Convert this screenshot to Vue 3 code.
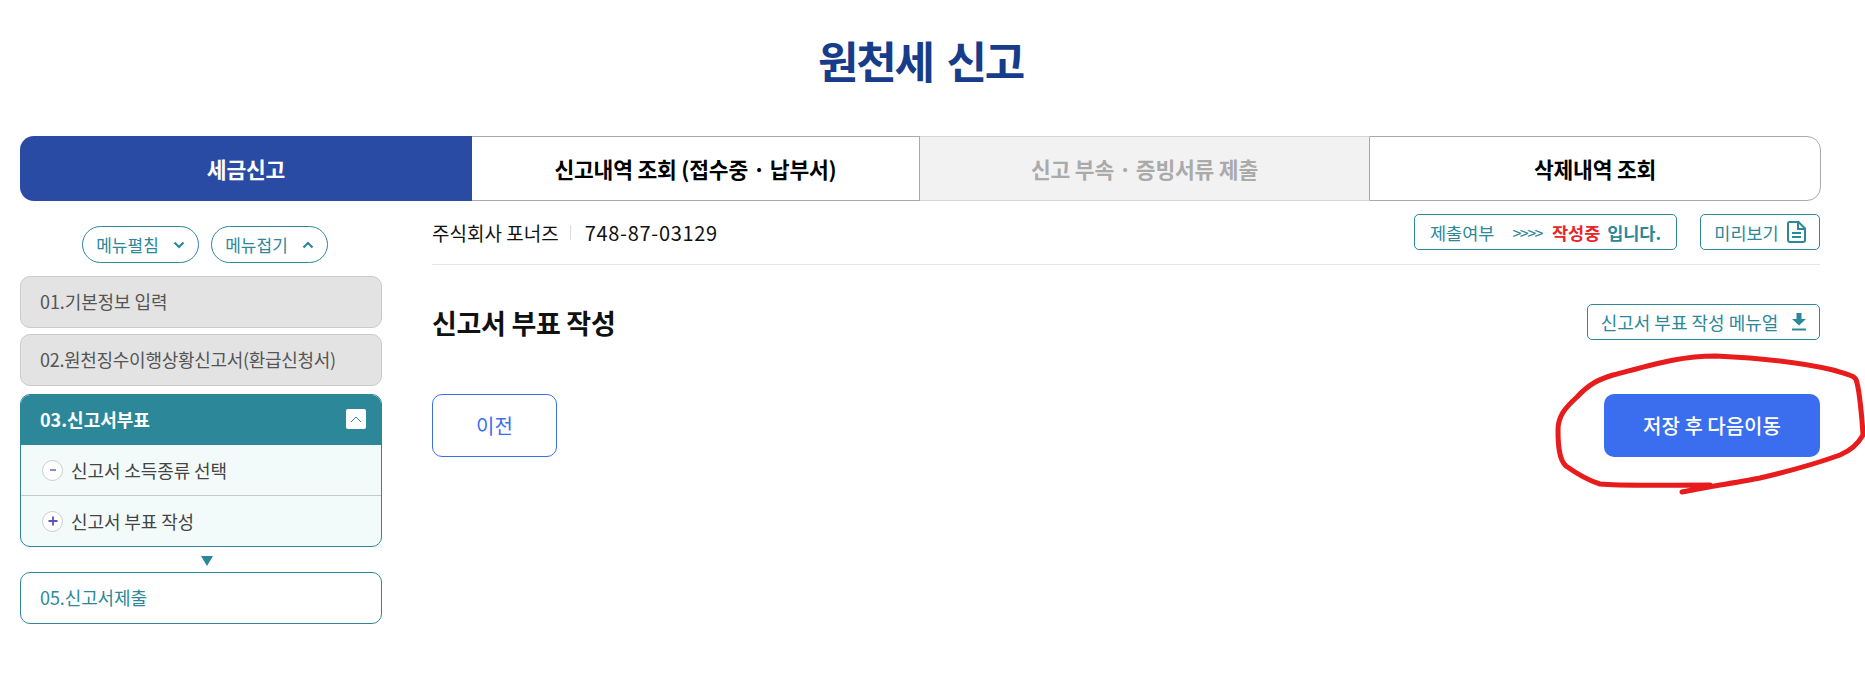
<script setup>
const tabs = [
  { label: '세금신고', cls: 'active' },
  { label: '신고내역 조회 (접수중 · 납부서)', cls: '' },
  { label: '신고 부속 · 증빙서류 제출', cls: 'disabled' },
  { label: '삭제내역 조회', cls: 'last' }
]
</script>

<template>
  <div class="page">
    <h1 class="title">원천세 신고</h1>

    <nav class="tabs">
      <a v-for="tab in tabs" :key="tab.label" class="tab" :class="tab.cls">{{ tab.label }}</a>
    </nav>

    <div class="content">
      <aside class="side">
        <div class="toggles">
          <button class="pill">
            메뉴펼침
            <svg width="12" height="8" viewBox="0 0 12 8"><path d="M1.500 1.500 6 6l4.500-4.500" fill="none" stroke="#2c8899" stroke-width="2.200"/></svg>
          </button>
          <button class="pill">
            메뉴접기
            <svg width="12" height="8" viewBox="0 0 12 8"><path d="M1.500 6.500 6 2l4.500 4.500" fill="none" stroke="#2c8899" stroke-width="2.200"/></svg>
          </button>
        </div>

        <div class="step done">01.기본정보 입력</div>
        <div class="step done tight">02.원천징수이행상황신고서(환급신청서)</div>

        <div class="group">
          <div class="group-head">
            <span>03.신고서부표</span>
            <i class="fold">
              <svg width="12" height="7" viewBox="0 0 12 7"><path d="M1 6 6 1l5 5" fill="none" stroke="#2c8899" stroke-width="1"/></svg>
            </i>
          </div>
          <div class="sub">
            <i class="circle"><svg width="10" height="10" viewBox="0 0 10 10"><path d="M2 5h6" stroke="#6a5fc4" stroke-width="1.500"/></svg></i>
            신고서 소득종류 선택
          </div>
          <div class="sub">
            <i class="circle"><svg width="10" height="10" viewBox="0 0 10 10"><path d="M0.500 5h9M5 0.500v9" stroke="#5a50c0" stroke-width="1.800"/></svg></i>
            신고서 부표 작성
          </div>
        </div>

        <div class="down"></div>
        <div class="step next">05.신고서제출</div>
      </aside>

      <main class="main">
        <div class="info-row">
          <div class="company">
            <span>주식회사 포너즈</span>
            <span class="bar"></span>
            <span class="biz-no">748-87-03129</span>
          </div>
          <div class="info-actions">
            <div class="outline status">
              <span>제출여부</span>
              <span class="arrows">&gt;&gt;&gt;&gt;</span>
              <span><b class="red">작성중</b> <b>입니다.</b></span>
            </div>
            <button class="outline preview">
              미리보기
              <svg width="19" height="22" viewBox="0 0 19 22"><path d="M2.500 1h9L18 7.500V19a2 2 0 0 1-2 2H3a2 2 0 0 1-2-2V2.500A1.500 1.500 0 0 1 2.500 1Z" fill="none" stroke="#2c8899" stroke-width="2"/><path d="M11 1v7h7" fill="none" stroke="#2c8899" stroke-width="2"/><path d="M5 12h9M5 16h9" stroke="#2c8899" stroke-width="2"/></svg>
            </button>
          </div>
        </div>

        <div class="head-row">
          <h2>신고서 부표 작성</h2>
          <button class="outline manual">
            신고서 부표 작성 메뉴얼
            <svg width="14" height="18" viewBox="0 0 14 18"><path d="M4.500 0h5v6H14L7 12.500 0 6h4.500Z" fill="#2c8899"/><path d="M0 16.500h14" stroke="#2c8899" stroke-width="2"/></svg>
          </button>
        </div>

        <div class="btn-row">
          <button class="btn prev">이전</button>
          <button class="btn save">저장 후 다음이동</button>
        </div>
      </main>
    </div>

    <!-- hand drawn marker over the save button -->
    <svg class="marker" width="1865" height="675" viewBox="0 0 1865 675">
      <path d="M1682 492 C1700 488 1740 482 1760 478 C1790 471 1815 464 1840 455 C1852 450 1858 444 1863 435 C1862 415 1859 390 1857 383 C1856 376 1853 376 1833 370 C1800 362 1760 358 1716 356 C1680 356 1655 364 1613 375 C1600 379 1590 383 1577 397 C1565 408 1558 416 1558 430 C1558 445 1559 460 1566 466 C1580 476 1590 481 1600 484 C1620 486 1660 485 1710 485" fill="none" stroke="#e81c1c" stroke-width="5" stroke-linecap="round" stroke-linejoin="round"/>
    </svg>
  </div>
</template>

<style scoped>
.page {
  position: relative;
  box-sizing: border-box;
  width: 1865px;
  height: 675px;
  padding: 0 44px 0 20px;
  overflow: hidden;
  font-family: "Noto Sans CJK KR", "Noto Sans", sans-serif;
  color: #111;
  background: #fff;
}

.title {
  margin: 0;
  height: 136px;
  padding-top: 26px;
  box-sizing: border-box;
  text-align: center;
  font-size: 44px;
  line-height: 68px;
  font-weight: 700;
  letter-spacing: -2.200px;
  word-spacing: 6px;
  color: #173d8a;
}

.tabs {
  display: grid;
  grid-template-columns: 452px 448px 449px 452px;
  height: 65px;
}

.tab {
  display: flex;
  align-items: center;
  justify-content: center;
  box-sizing: border-box;
  border: 1px solid #aaa;
  border-left: 0;
  font-size: 21.500px;
  font-weight: 700;
  letter-spacing: -0.2px;
  color: #000;
}

.tab.active {
  background: #2a4ba3;
  border: 0;
  border-radius: 14px 0 0 14px;
  color: #fff;
}

.tab.disabled {
  background: #f2f2f2;
  border-color: #d6d6d6;
  border-right: 0;
  color: #aaa;
}

.tab.last {
  border-left: 1px solid #aaa;
  border-radius: 0 14px 14px 0;
}

.content {
  display: flex;
  gap: 50px;
  align-items: flex-start;
}

.side {
  flex: none;
  width: 362px;
  padding-top: 25px;
}

.toggles {
  display: flex;
  justify-content: center;
  gap: 12px;
  margin-bottom: 13px;
  padding-left: 8px;
}

.pill {
  display: flex;
  align-items: center;
  justify-content: center;
  gap: 14px;
  box-sizing: border-box;
  width: 117px;
  height: 37px;
  padding: 0;
  border: 1px solid #2c8899;
  border-radius: 19px;
  background: #fff;
  font-family: inherit;
  font-size: 17px;
  color: #2c8899;
}

.step {
  display: flex;
  align-items: center;
  box-sizing: border-box;
  height: 52px;
  padding: 0 0 2px 19px;
  border-radius: 10px;
  font-size: 18px;
  letter-spacing: -0.1px;
}

.step.tight {
  letter-spacing: -0.3px;
}

.step.done {
  margin-bottom: 6px;
  border: 1px solid #cacaca;
  background: #e3e3e3;
  color: #555;
}

.step.next {
  border: 1px solid #2c8899;
  color: #2c8899;
}

.group {
  margin-top: 8px;
  overflow: hidden;
  border: 1px solid #2c8899;
  border-radius: 10px;
  background: #f3fbfa;
}

.group-head {
  display: flex;
  align-items: center;
  justify-content: space-between;
  height: 50px;
  padding: 0 15px 2px 19px;
  box-sizing: border-box;
  background: #2c8899;
  color: #fff;
  font-size: 18px;
  font-weight: 700;
}

.fold {
  display: flex;
  align-items: center;
  justify-content: center;
  width: 20px;
  height: 20px;
  border-radius: 2px;
  background: #fff;
}

.sub {
  display: flex;
  align-items: center;
  gap: 8px;
  height: 50px;
  padding-left: 21px;
  font-size: 18px;
  letter-spacing: -0.1px;
  color: #444;
}

.sub + .sub {
  border-top: 1px solid #c8c8c8;
}

.circle {
  display: flex;
  align-items: center;
  justify-content: center;
  box-sizing: border-box;
  width: 21px;
  height: 21px;
  border: 1px solid #ccc;
  border-radius: 50%;
  background: #fff;
}

.down {
  width: 0;
  height: 0;
  margin: 9px 0 6px 181px;
  border-left: 6px solid transparent;
  border-right: 6px solid transparent;
  border-top: 10px solid #2c8899;
}

.main {
  flex: 1;
  min-width: 0;
  margin-right: 1px;
}

.info-row {
  display: flex;
  align-items: center;
  justify-content: space-between;
  box-sizing: border-box;
  height: 64px;
  padding-top: 13px;
  padding-bottom: 14px;
  border-bottom: 1px solid #e4e7ee;
}

.company {
  display: flex;
  align-items: center;
  font-size: 19px;
}

.bar {
  width: 1px;
  height: 15px;
  margin: 0 14px 0 11px;
  background: #ddd;
}

.biz-no {
  font-size: 20px;
  letter-spacing: 0.7px;
}

.info-actions {
  display: flex;
  gap: 23px;
}

.outline {
  display: flex;
  align-items: center;
  box-sizing: border-box;
  height: 36px;
  border: 1px solid #2c8899;
  border-radius: 5px;
  background: #fff;
  font-family: inherit;
  font-size: 17.500px;
  color: #2c8899;
}

.status {
  width: 263px;
  padding-left: 15px;
}

.arrows {
  margin: 0 10px 0 18px;
  font-size: 16px;
  letter-spacing: -1.500px;
}

.red {
  margin-right: 3px;
  color: #e8262a;
}

.preview {
  justify-content: center;
  gap: 8px;
  width: 120px;
  padding: 0;
}

.head-row {
  display: flex;
  align-items: center;
  justify-content: space-between;
  height: 36px;
  margin-top: 39px;
}

.head-row h2 {
  margin: 0;
  font-size: 27px;
  font-weight: 700;
  letter-spacing: -0.3px;
  color: #111;
}

.manual {
  justify-content: center;
  gap: 14px;
  width: 233px;
  padding: 0;
  font-size: 18px;
}

.btn-row {
  display: flex;
  justify-content: space-between;
  margin-top: 54px;
}

.btn {
  box-sizing: border-box;
  height: 63px;
  border-radius: 10px;
  font-family: inherit;
  font-size: 20px;
}

.prev {
  width: 125px;
  border: 1px solid #3a6eee;
  background: #fff;
  color: #3a6eee;
}

.save {
  width: 216px;
  border: 0;
  background: #3a6eee;
  color: #fff;
  font-weight: 500;
}

.marker {
  position: absolute;
  top: 0;
  left: 0;
  pointer-events: none;
}
</style>
